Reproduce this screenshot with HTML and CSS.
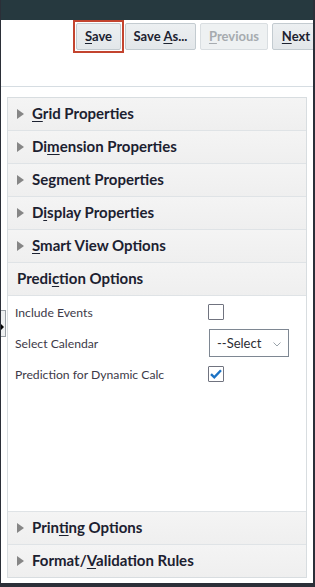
FILE: index.html
```html
<!DOCTYPE html>
<html>
<head>
<meta charset="utf-8">
<link rel="stylesheet" href="styles.css">
</head>
<body>
<div class="frame">
  <div class="topbar"></div>
  <div class="toolbar">
    <span class="ring"><button class="btn btn-save"><u>S</u>ave</button></span>
    <button class="btn btn-saveas">Save <u>A</u>s...</button>
    <button class="btn btn-prev" disabled><u>P</u>revious</button>
    <button class="btn btn-next"><u>N</u>ext</button>
  </div>
  <div class="rule"></div>
  <div class="panel">
    <div class="hdr"><span class="tri"></span><span class="ttl"><u>G</u>rid Properties</span></div>
    <div class="hdr"><span class="tri"></span><span class="ttl">Di<u>m</u>ension Properties</span></div>
    <div class="hdr"><span class="tri"></span><span class="ttl">Segment Properties</span></div>
    <div class="hdr"><span class="tri"></span><span class="ttl">D<u>i</u>splay Properties</span></div>
    <div class="hdr"><span class="tri"></span><span class="ttl"><u>S</u>mart View Options</span></div>
    <div class="hdr open"><span class="ttl">Predi<u>c</u>tion Options</span></div>
    <div class="content">
      <div class="form">
        <label class="lbl">Include Events</label>
        <span class="cb"></span>
        <label class="lbl">Select Calendar</label>
        <span class="sel">--Select<svg class="chev" width="8" height="5" viewBox="0 0 8 5"><path d="M0.5 0.5 L4 4 L7.5 0.5" fill="none" stroke="#9aa3ab" stroke-width="1"/></svg></span>
        <label class="lbl">Prediction for Dynamic Calc</label>
        <span class="cb checked"><svg width="14" height="14" viewBox="0 0 14 14"><path d="M2 7.2 L5.3 10.4 L12 3.3" fill="none" stroke="#1b72c4" stroke-width="2.4"/></svg></span>
      </div>
    </div>
    <div class="hdr"><span class="tri"></span><span class="ttl">Prin<u>t</u>ing Options</span></div>
    <div class="hdr last"><span class="tri"></span><span class="ttl">Format/<u>V</u>alidation Rules</span></div>
  </div>
  <div class="splitter"><span class="arrow"></span></div>
</div>
</body>
</html>
```

FILE: styles.css
```css
html, body {
  margin: 0;
  padding: 0;
}
body {
  width: 315px;
  height: 587px;
  background: #2b2f38;
  overflow: hidden;
  font-family: Lato, "Liberation Sans", sans-serif;
}
.frame {
  position: relative;
  margin: 0 2px 0 1px;
  height: 583px;
  background: #ffffff;
  display: flex;
  flex-direction: column;
  overflow: hidden;
}
.topbar {
  height: 20px;
  flex: none;
  background: #26393f;
}
.toolbar {
  height: 66px;
  flex: none;
  display: flex;
  align-items: flex-start;
  padding: 0 0 0 72px;
  box-sizing: border-box;
}
.ring {
  display: flex;
  flex: none;
  border: 2px solid #c3442f;
  padding: 1px;
  margin-right: 1px;
}
.btn {
  flex: none;
  height: 27px;
  box-sizing: border-box;
  border: 1px solid #c3cbd0;
  border-radius: 2px;
  background: linear-gradient(#eceff1, #e3e7ea);
  font-family: Lato, "Liberation Sans", sans-serif;
  font-weight: 700;
  font-size: 13px;
  color: #1c2230;
  padding: 0 0 1px 0;
  text-align: center;
  margin-top: 3px;
}
.ring .btn { margin-top: 0; }
.btn u { text-decoration-thickness: 1px; text-underline-offset: 2px; }
.btn-save { width: 45px; }
.btn-saveas { width: 71px; margin-right: 4px; }
.btn-prev {
  width: 68px;
  margin-right: 4px;
  background: #eef1f2;
  border-color: #d9dee1;
  color: #a6abaf;
}
.btn-next { width: 48px; }
.rule {
  height: 1px;
  flex: none;
  background: #d6dde2;
  margin-bottom: 10px;
}
.panel {
  flex: 1;
  margin: 0 6px 5px 6px;
  border: 1px solid #d8dde0;
  display: flex;
  flex-direction: column;
}
.hdr {
  height: 32px;
  flex: none;
  box-sizing: border-box;
  padding-bottom: 2px;
  border-bottom: 1px solid #dfe3e6;
  background: linear-gradient(#f4f4f4, #efefef);
  display: flex;
  align-items: center;
  padding-left: 9px;
  color: #1c2130;
  font-weight: 700;
  font-size: 15px;
}
.hdr { height: 33px; }
.hdr.last { border-bottom: none; height: 32px; }
.hdr u { text-decoration-thickness: 1px; text-underline-offset: 2px; }
.tri {
  width: 0;
  height: 0;
  border-top: 5.5px solid transparent;
  border-bottom: 5.5px solid transparent;
  border-left: 7px solid #868686;
  margin-right: 8px;
  margin-top: 1px;
}
.content {
  flex: 1;
  background: #ffffff;
  border-bottom: 1px solid #dfe3e6;
  padding: 8px 0 0 7px;
}
.form {
  display: grid;
  grid-template-columns: 193px auto;
  row-gap: 9px;
  align-items: center;
  justify-items: start;
}
.lbl {
  font-size: 12.2px;
  color: #3d3a48;
}
.cb {
  width: 16px;
  height: 16px;
  box-sizing: border-box;
  border: 1px solid #70737f;
  border-radius: 1px;
  background: #fff;
  display: flex;
  align-items: center;
  justify-content: center;
}
.sel {
  width: 80px;
  height: 28px;
  box-sizing: border-box;
  margin-left: 1px;
  border: 1px solid #7e8792;
  display: flex;
  align-items: center;
  padding-left: 7px;
  font-size: 13px;
  color: #2d2d33;
}
.chev { margin-left: 12px; margin-top: 2px; }
.splitter {
  position: absolute;
  left: -1px;
  top: 310px;
  width: 5px;
  height: 25px;
  background: #eef0f1;
  border: 1px solid #9aa0a6;
  border-left: none;
}
.arrow {
  position: absolute;
  left: 1px;
  top: 13px;
  width: 0;
  height: 0;
  border-top: 3px solid transparent;
  border-bottom: 3px solid transparent;
  border-left: 3px solid #000;
}
```
